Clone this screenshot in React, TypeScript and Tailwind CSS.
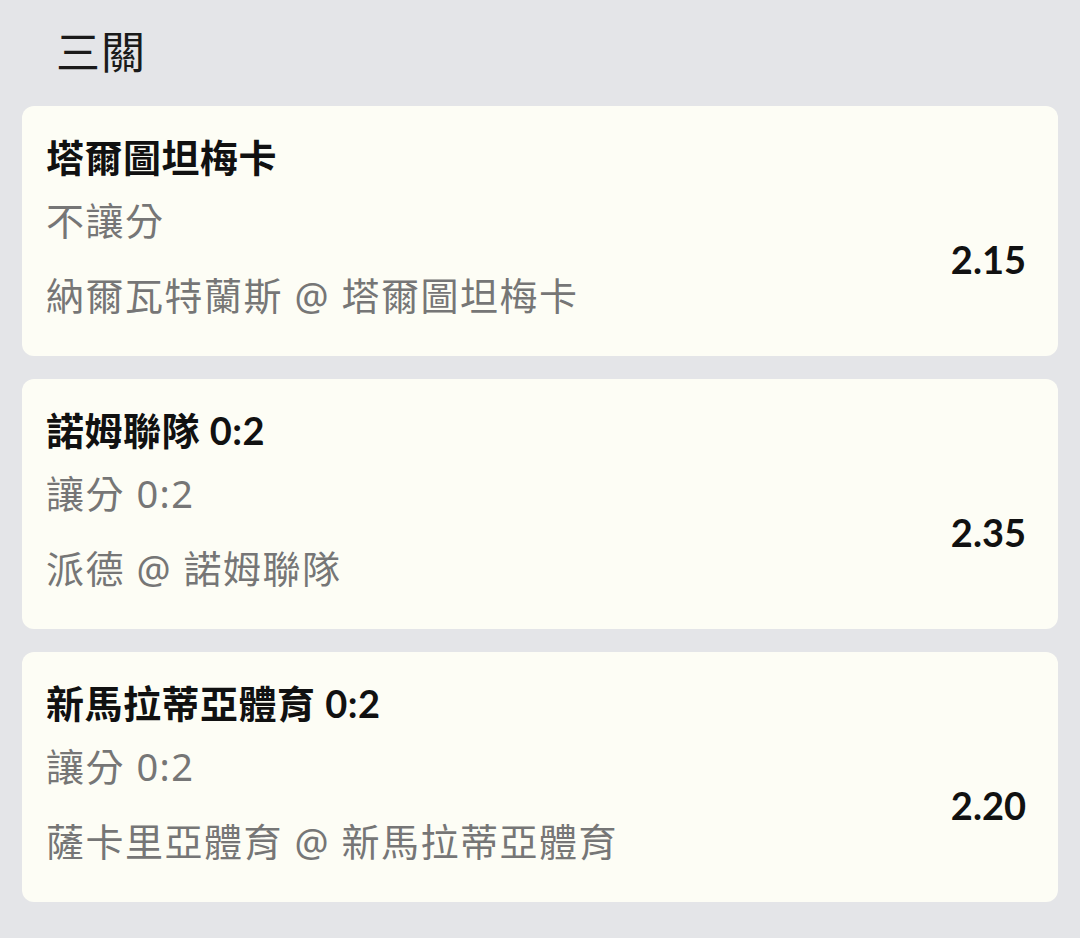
import React from 'react';

const BETS = [
  { title: '塔爾圖坦梅卡', market: '不讓分', match: '納爾瓦特蘭斯 @ 塔爾圖坦梅卡', odds: '2.15' },
  { title: '諾姆聯隊 0:2', market: '讓分 0:2', match: '派德 @ 諾姆聯隊', odds: '2.35' },
  { title: '新馬拉蒂亞體育 0:2', market: '讓分 0:2', match: '薩卡里亞體育 @ 新馬拉蒂亞體育', odds: '2.20' },
];

const GRAY_FONT = { fontFamily: "'Noto Sans', 'Noto Sans CJK TC', sans-serif" };

export default function App() {
  return (
    <div
      className="min-h-[938px] w-[1080px] bg-[#e4e5e8] px-[22px]"
      style={{ fontFamily: "Lato, 'Noto Sans CJK TC', sans-serif" }}
    >
      {/* Header */}
      <div className="pt-[22px] pl-[34px] text-[44px] leading-[60px] tracking-[1px] text-[#1a1a1a]" style={GRAY_FONT}>
        三關
      </div>

      {/* Bet list */}
      <div className="mt-[24px] flex flex-col gap-[23px]">
        {BETS.map((b, i) => (
          <div key={i} className="flex h-[250px] items-center justify-between rounded-[12px] bg-[#fdfdf5] pl-[24px] pr-[32px]">
            <div className="flex flex-col self-stretch pt-[26px] pb-[34px]">
              <div className="text-[38px] font-bold leading-[50px] tracking-[0.5px] text-[#111111]">{b.title}</div>
              <div className="mt-[13px] text-[38px] leading-[50px] tracking-[1.5px] text-[#767676]" style={GRAY_FONT}>
                {b.market}
              </div>
              <div className="mt-[25px] text-[38px] leading-[50px] tracking-[1.5px] text-[#767676]" style={GRAY_FONT}>
                {b.match}
              </div>
            </div>
            <div className="mt-[56px] text-[38px] font-bold leading-none text-[#111111]">{b.odds}</div>
          </div>
        ))}
      </div>
    </div>
  );
}
